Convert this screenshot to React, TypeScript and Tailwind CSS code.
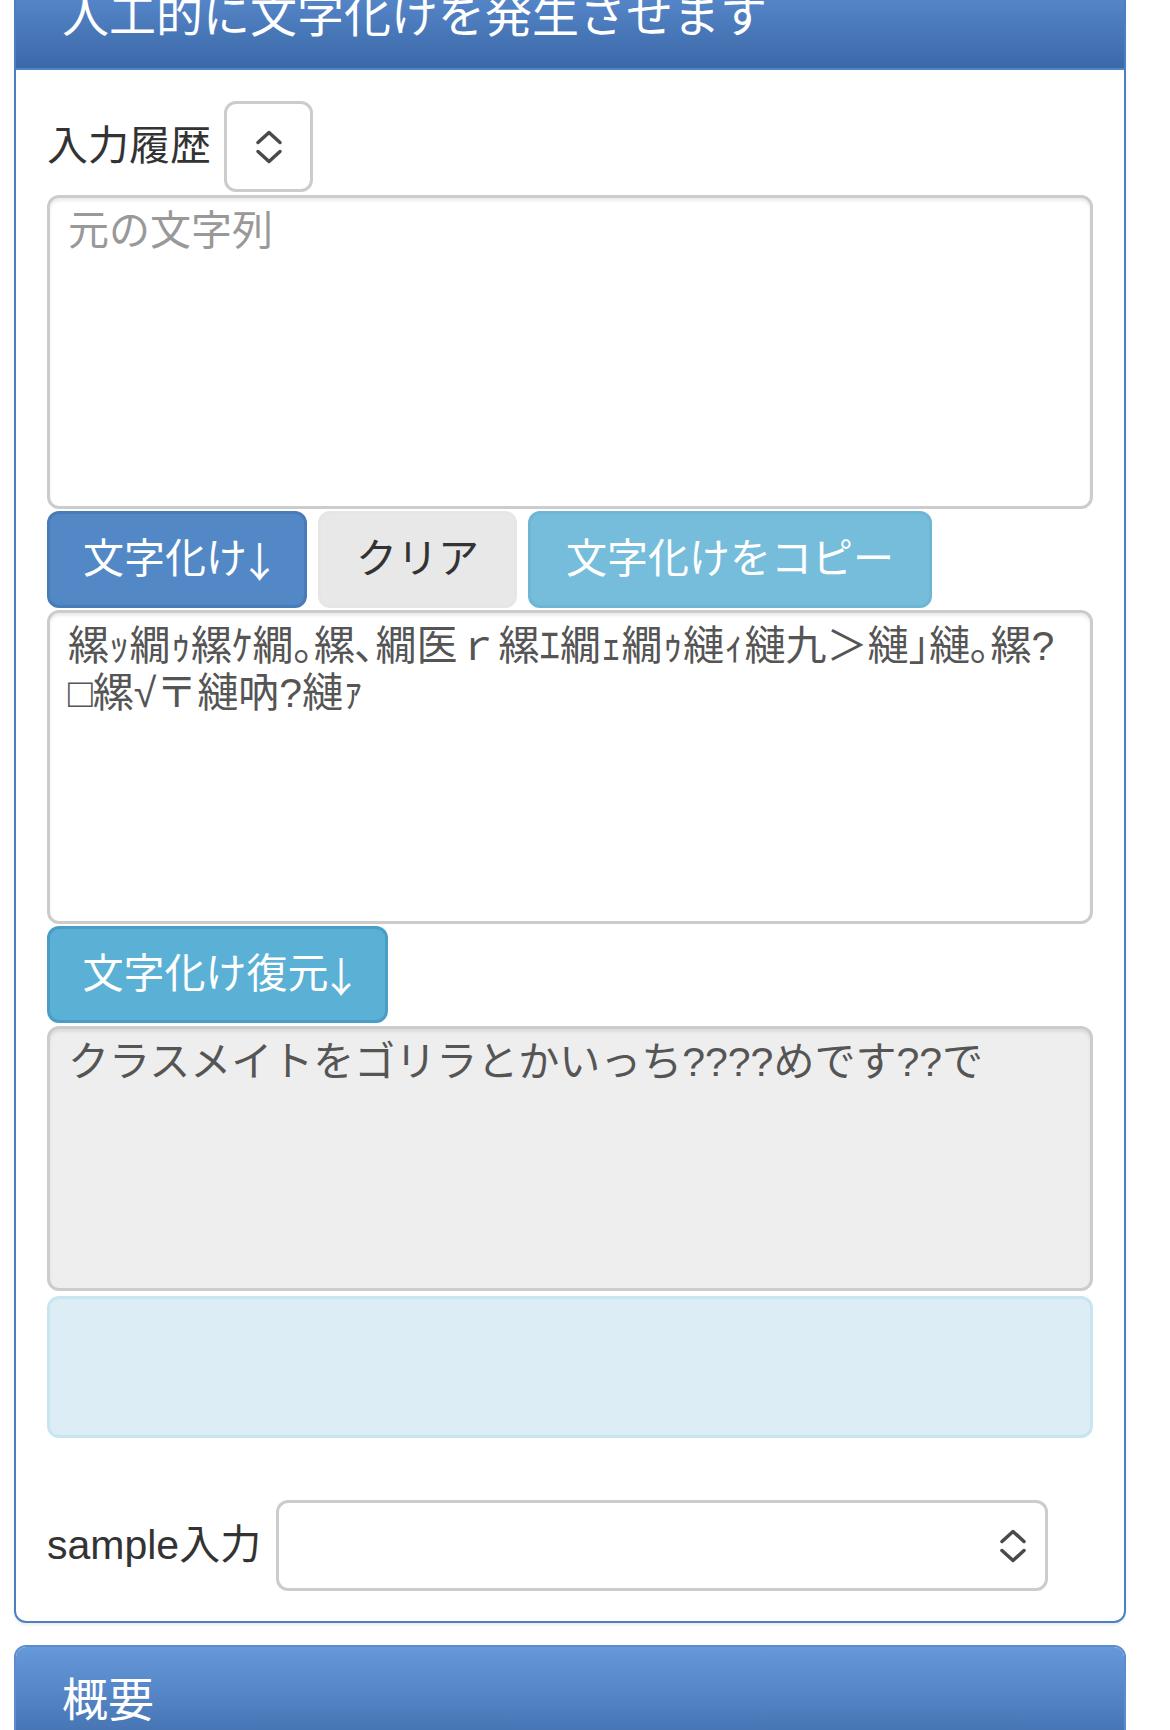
import React from "react";

const GARBLED =
  "縲ｯ繝ｩ縲ｹ繝｡縲､繝医ｒ縲ｴ繝ｪ繝ｩ縺ｨ縺九＞縺｣縺｡縲?□縲√〒縺吶?縺ｧ";
const RESTORED = "クラスメイトをゴリラとかいっち????めです??で";

function UpDown() {
  return (
    <svg width="32" height="36" viewBox="0 0 32 36" fill="none" stroke="#4a4a4a" strokeWidth="3.5" strokeLinecap="round" strokeLinejoin="round">
      <polyline points="5,13.5 16,3.5 27,13.5" />
      <polyline points="5,22.5 16,32.5 27,22.5" />
    </svg>
  );
}

function Arrow() {
  return (
    <span className="ml-[-8px] inline-block w-[32px] font-['Noto_Sans_CJK_JP',sans-serif]">
      ↓
    </span>
  );
}

const field =
  "block w-full resize-none rounded-[12px] border-[3px] border-[#ccc] px-[18px] pt-[10px] pr-[24px] text-[41px] leading-[47px] text-[#555] shadow-[inset_0_3px_3px_rgba(0,0,0,0.075)] outline-none placeholder:text-[#999]";

const btn =
  "flex h-[97px] items-center justify-center whitespace-nowrap rounded-[12px] border-[3px] text-[41px] leading-[47px]";

export default function App() {
  return (
    <div className="h-[1730px] w-[1170px] overflow-hidden bg-white font-['Liberation_Sans','Noto_Sans_CJK_JP',sans-serif] text-[#333]">
      <div className="ml-[14px] mt-[-41px] w-[1112px]">
        {/* main panel */}
        <section className="overflow-hidden rounded-[12px] border-2 border-[#4d80c2] shadow-[0_2px_3px_rgba(0,0,0,0.08)]">
          <header className="border-b-2 border-[#5185c6] bg-gradient-to-b from-[#6396d8] to-[#3b68a8] px-[46px] pt-[30px] pb-[27px]">
            <h3 className="text-[47px] leading-[50px] font-normal text-white">
              人工的に文字化けを発生させます
            </h3>
          </header>

          <div className="px-[31px] pt-[31px] pb-[30px]">
            <div className="flex items-center gap-[13px]">
              <label className="text-[41px] leading-[47px]">入力履歴</label>
              <div className="flex h-[91px] w-[89px] items-center justify-center rounded-[12px] border-[3px] border-[#ccc] bg-white">
                <UpDown />
              </div>
            </div>

            <textarea
              className={`mt-[3px] h-[314px] bg-white ${field}`}
              placeholder="元の文字列"
            />

            <div className="mt-[2px] flex gap-[11px]">
              <button className={`${btn} w-[260px] border-[#4a7bb9] bg-[#5388c6] text-white`}>
                文字化け<Arrow />
              </button>
              <button className={`${btn} w-[199px] border-[#e6e6e6] bg-[#e8e8e8] text-[#333]`}>
                クリア
              </button>
              <button className={`${btn} w-[404px] border-[#6db6d4] bg-[#76bddb] text-white`}>
                文字化けをコピー
              </button>
            </div>

            <textarea
              className={`mt-[2px] h-[314px] bg-white ${field}`}
              readOnly
              defaultValue={GARBLED}
            />

            <button className={`${btn} mt-[2px] w-[341px] border-[#4a9ec6] bg-[#5bb0d6] text-white`}>
              文字化け復元<Arrow />
            </button>

            <textarea
              className={`mt-[3px] h-[265px] bg-[#eee] ${field}`}
              readOnly
              defaultValue={RESTORED}
            />

            <div className="mt-[5px] h-[142px] rounded-[12px] border-[3px] border-[#c8e6f0] bg-[#dcedf5]" />

            <div className="mt-[62px] flex items-center gap-[15px]">
              <label className="text-[41px] leading-[47px]">sample入力</label>
              <div className="flex h-[91px] w-[772px] items-center justify-end rounded-[12px] border-[3px] border-[#ccc] bg-white pr-[16px]">
                <UpDown />
              </div>
            </div>
          </div>
        </section>

        {/* overview panel */}
        <section className="mt-[22px] overflow-hidden rounded-t-[12px] border-2 border-[#5b8ccf]">
          <header className="bg-gradient-to-b from-[#6699da] to-[#3f6cab] px-[46px] py-[28px]">
            <h3 className="text-[46px] leading-[50px] font-normal text-white">概要</h3>
          </header>
          <div className="h-[200px]" />
        </section>
      </div>
    </div>
  );
}
